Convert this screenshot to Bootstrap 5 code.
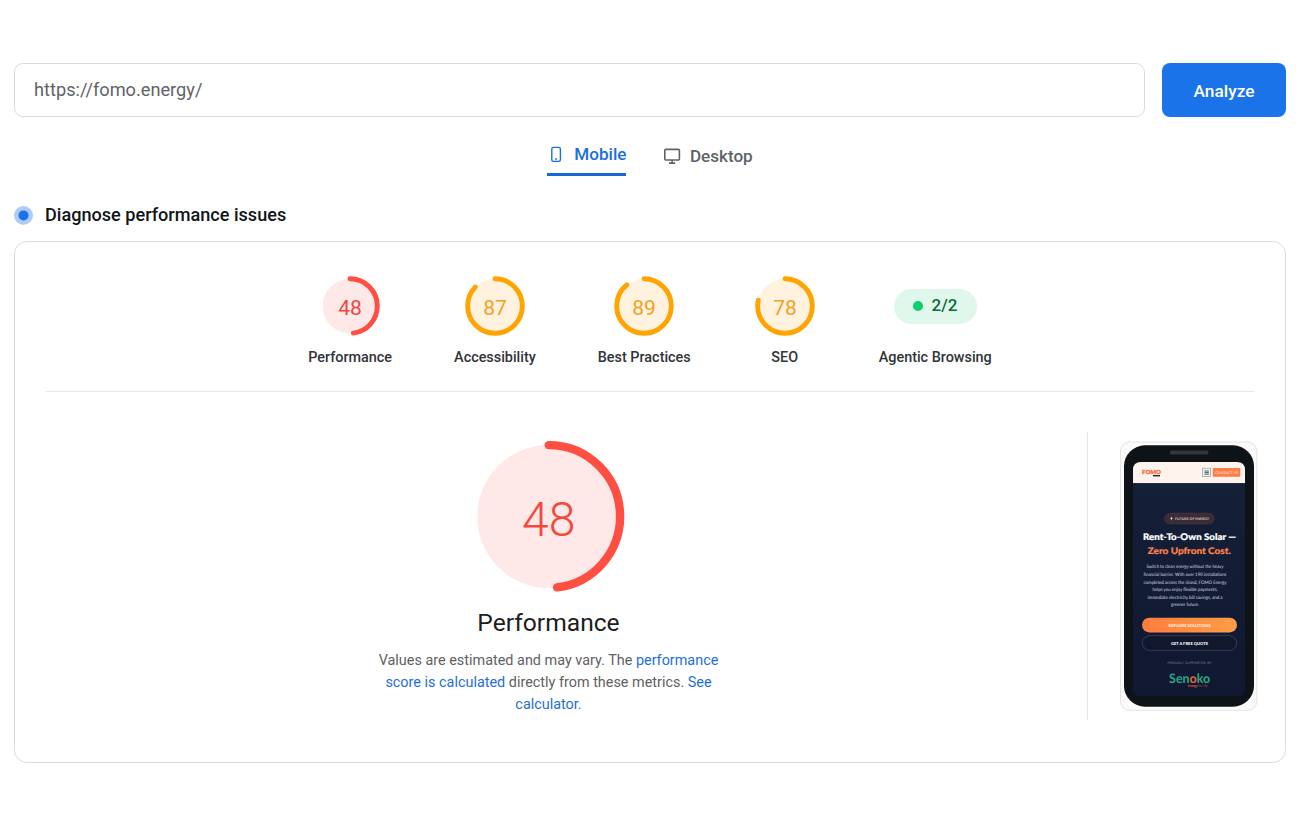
<!DOCTYPE html>
<html lang="en">
<head>
<meta charset="utf-8">
<meta name="viewport" content="width=device-width, initial-scale=1">
<title>PageSpeed report</title>
<link href="https://cdn.jsdelivr.net/npm/bootstrap@5.3.0/dist/css/bootstrap.min.css" rel="stylesheet">
<style>
  body { font-family: Roboto, "Liberation Sans", sans-serif; color: #202124; background: #fff; overflow: hidden; }
  .page { padding: 63px 14px 0; }
  .fw-md { font-weight: 500; }
  .url-box { height: 54px; border: 1px solid #dadce0; border-radius: 9px; padding: 0 19px 2px; font-size: 18.2px; color: #5f6368; }
  .url-box:focus { box-shadow: none; }
  .go-btn { width: 124px; height: 54px; border-radius: 8px; background: #1a73e8; color: #fff; font-size: 17.3px; flex: none; border: 0; }
  .search { gap: 17.5px; }
  .tabs { gap: 37.5px; height: 59px; }
  .tab-item { font-size: 17.1px; line-height: 24px; color: #5f6368; text-decoration: none; }
  .tab-desk { padding-bottom: 8px; }
  .tab-on { color: #1a6fe0; border-bottom: 3px solid #1967d2; height: 34px; }
  .diag { height: 65px; gap: 12px; font-size: 18.1px; color: #111417; padding-bottom: 13px; }
  .report { border: 1px solid #dadce0; border-radius: 13px; height: 522px; padding: 0 31px; }
  .scores { gap: 62px; height: 150px; padding-top: 32px; border-bottom: 1px solid #e8e8e8; }
  .score-label { font-size: 14.4px; line-height: 20px; margin-top: 10px; color: #303438; white-space: nowrap; }
  .pill { height: 35px; width: 83px; border-radius: 18px; background: #e0f8eb; color: #0b6b3a; font-size: 17px; gap: 8.5px; margin: 14.5px 0; }
  .pill-dot { width: 10px; height: 10px; border-radius: 50%; background: #0ccf6b; }
  .detail { height: 288px; margin-top: 40px; margin-right: -3px; }
  .gauge-col { padding-top: 5px; padding-right: 36px; }
  .gauge-title { font-size: 24.6px; line-height: 32px; margin: 12px 0 11px; color: #1b1d20; }
  .gauge-note { width: 350px; font-size: 14.42px; line-height: 21.8px; color: #616161; }
  .gauge-note a { color: #1f6fd6; text-decoration: none; }
  .shot { width: 170px; border-left: 1px solid #e4e4e4; padding: 9px 0 0 32px; flex: none; }
  svg { display: block; flex: none; }
</style>
</head>
<body>
<main class="page">
  <form class="search d-flex">
    <input class="url-box form-control" type="text" value="https://fomo.energy/" aria-label="URL">
    <button class="go-btn btn fw-md p-0 pt-1" type="button">Analyze</button>
  </form>

  <nav class="tabs d-flex justify-content-center align-items-end">
    <a class="tab-item tab-on fw-md d-flex" href="#">
      <svg width="27" height="24" viewBox="0 0 27 24" fill="none" stroke="currentColor" stroke-width="1.4"><rect x="4.8" y="5.4" width="8.6" height="14" rx="1.6"/><path d="M8.1 17h2"/></svg>
      <span>Mobile</span>
    </a>
    <a class="tab-item tab-desk fw-md d-flex" href="#">
      <svg width="26" height="24" viewBox="0 0 26 24" fill="none" stroke="currentColor" stroke-width="1.6"><rect x=".8" y="5.4" width="14.6" height="10.6" rx="1"/><path d="M8.1 16v3M5 19.1h6.2"/></svg>
      <span>Desktop</span>
    </a>
  </nav>

  <div class="diag fw-md d-flex align-items-end">
    <svg width="19" height="27" viewBox="0 0 19 27"><circle cx="9.5" cy="14.4" r="9.5" fill="#aecbfa"/><circle cx="9.5" cy="14.4" r="5" fill="#1a73e8"/></svg>
    <span>Diagnose performance issues</span>
  </div>

  <section class="report">
    <div class="scores d-flex justify-content-center">
      <div class="d-flex flex-column align-items-center">
        <svg width="64" height="64" viewBox="0 0 64 64"><circle cx="32" cy="32" r="27.3" fill="#ffe8e8"/><circle cx="32" cy="32" r="27.3" fill="none" stroke="#ff4e42" stroke-width="4.9" stroke-linecap="round" pathLength="100" stroke-dasharray="48 100" transform="rotate(-90 32 32)"/><text x="32" y="41" text-anchor="middle" font-size="21" fill="#eb4740">48</text></svg>
        <div class="score-label fw-md">Performance</div>
      </div>
      <div class="d-flex flex-column align-items-center">
        <svg width="64" height="64" viewBox="0 0 64 64"><circle cx="32" cy="32" r="27.3" fill="#fff3e0"/><circle cx="32" cy="32" r="27.3" fill="none" stroke="#ffa400" stroke-width="4.9" stroke-linecap="round" pathLength="100" stroke-dasharray="87.2 100" transform="rotate(-90 32 32)"/><text x="32" y="41" text-anchor="middle" font-size="21" fill="#f5a01f">87</text></svg>
        <div class="score-label fw-md">Accessibility</div>
      </div>
      <div class="d-flex flex-column align-items-center">
        <svg width="64" height="64" viewBox="0 0 64 64"><circle cx="32" cy="32" r="27.3" fill="#fff3e0"/><circle cx="32" cy="32" r="27.3" fill="none" stroke="#ffa400" stroke-width="4.9" stroke-linecap="round" pathLength="100" stroke-dasharray="89.2 100" transform="rotate(-90 32 32)"/><text x="32" y="41" text-anchor="middle" font-size="21" fill="#f5a01f">89</text></svg>
        <div class="score-label fw-md">Best Practices</div>
      </div>
      <div class="d-flex flex-column align-items-center">
        <svg width="64" height="64" viewBox="0 0 64 64"><circle cx="32" cy="32" r="27.3" fill="#fff3e0"/><circle cx="32" cy="32" r="27.3" fill="none" stroke="#ffa400" stroke-width="4.9" stroke-linecap="round" pathLength="100" stroke-dasharray="78.4 100" transform="rotate(-90 32 32)"/><text x="32" y="41" text-anchor="middle" font-size="21" fill="#f5a01f">78</text></svg>
        <div class="score-label fw-md">SEO</div>
      </div>
      <div class="d-flex flex-column align-items-center">
        <div class="pill fw-md d-flex align-items-center justify-content-center"><span class="pill-dot"></span><span>2/2</span></div>
        <div class="score-label fw-md">Agentic Browsing</div>
      </div>
    </div>

    <div class="detail d-flex">
      <div class="gauge-col flex-grow-1 d-flex flex-column align-items-center text-center">
        <svg width="160" height="158" viewBox="0 0 160 158"><circle cx="79.7" cy="79.5" r="71.5" fill="#ffe8e8"/><circle cx="79.7" cy="79.5" r="71.4" fill="none" stroke="#ff4e42" stroke-width="8.4" stroke-linecap="round" pathLength="100" stroke-dasharray="48.1 100" transform="rotate(-90 79.7 79.5)"/><text x="79.7" y="99" text-anchor="middle" font-size="48" font-weight="300" fill="#f5483d">48</text></svg>
        <h2 class="gauge-title fw-normal">Performance</h2>
        <p class="gauge-note mb-0">Values are estimated and may vary. The <a href="#">performance score is calculated</a> directly from these metrics. <a href="#">See calculator.</a></p>
      </div>
      <div class="shot">
        <svg width="138" height="270" viewBox="1120 441 138 270" font-family="Lato, sans-serif" text-anchor="middle" text-rendering="geometricPrecision">
          <defs>
            <linearGradient id="cta"><stop offset="0" stop-color="#ff7d3e"/><stop offset="1" stop-color="#ff9d47"/></linearGradient>
            <linearGradient id="sky" x2="0" y2="1"><stop offset="0" stop-color="#142038"/><stop offset="1" stop-color="#111831"/></linearGradient>
          </defs>
          <rect x="1120.5" y="442" width="136.3" height="268.3" rx="9" fill="#fafafa" stroke="#e4e4e4"/>
          <rect x="1124" y="445.3" width="130" height="261.4" rx="21" fill="#0e1317"/>
          <rect x="1170" y="450.4" width="38.3" height="4" rx="1" fill="#33363b"/>
          <path d="M1133 483.3V470q0-8 8-8h96q8 0 8 8v13.3z" fill="#fff3ee"/>
          <path d="M1133 483.3h112v205.7q0 7-7 7h-98q-7 0-7-7z" fill="url(#sky)"/>
          <text x="1151.5" y="474.2" font-size="5.6" font-weight="900" fill="#fb6a3b" stroke="#fb6a3b" stroke-width=".3" textLength="19" lengthAdjust="spacingAndGlyphs">FOMO</text>
          <rect x="1153" y="475" width="7" height="1.4" fill="#26252a"/>
          <rect x="1202.6" y="468.2" width="8" height="8.2" fill="#f3efee" stroke="#91a09f" stroke-width=".7"/>
          <path d="M1204.5 471h4.3M1204.5 472.6h4.3M1204.5 474.2h4.3" stroke="#424b52" stroke-width=".9"/>
          <rect x="1212.8" y="468" width="27.4" height="8.8" fill="#ff7d47"/>
          <text x="1226.5" y="473.6" font-size="3.4" font-weight="700" fill="#ffd7c4" textLength="23" lengthAdjust="spacingAndGlyphs">CONTACT US</text>
          <rect x="1164.8" y="513.2" width="49.2" height="10.6" rx="5.3" fill="#3a2b37" stroke="#5b3a38" stroke-width=".6"/>
          <path d="M1171.7 516.3l-1.5 2.5h1.2l-.5 2 1.8-2.7h-1.2z" fill="#fff"/>
          <text x="1192" y="519.8" font-size="3.5" font-weight="700" fill="#d8cbcc" textLength="34" lengthAdjust="spacingAndGlyphs">FUTURE OF ENERGY</text>
          <text x="1189.5" y="540" font-size="9.1" font-weight="900" fill="#fff" stroke="#fff" stroke-width=".2" textLength="93" lengthAdjust="spacingAndGlyphs">Rent-To-Own Solar —</text>
          <text x="1189.3" y="554" font-size="9.1" font-weight="900" fill="#fc8048" stroke="#fc8048" stroke-width=".2" textLength="83" lengthAdjust="spacingAndGlyphs">Zero Upfront Cost.</text>
          <g font-size="4.7" fill="#d8dce6">
            <text x="1185" y="568.4" textLength="77" lengthAdjust="spacingAndGlyphs">Switch to clean energy without the heavy</text>
            <text x="1185" y="576" textLength="83" lengthAdjust="spacingAndGlyphs">financial barrier. With over 190 installations</text>
            <text x="1185" y="583.6" textLength="83" lengthAdjust="spacingAndGlyphs">completed across the island, FOMO Energy</text>
            <text x="1185" y="591.2" textLength="65" lengthAdjust="spacingAndGlyphs">helps you enjoy flexible payments,</text>
            <text x="1185" y="598.8" textLength="75" lengthAdjust="spacingAndGlyphs">immediate electricity bill savings, and a</text>
            <text x="1185" y="606.3" textLength="28" lengthAdjust="spacingAndGlyphs">greener future.</text>
          </g>
          <rect x="1142" y="617.7" width="95" height="14.8" rx="7.4" fill="url(#cta)"/>
          <text x="1189.5" y="626.5" font-size="4" font-weight="900" fill="#fff1e6" textLength="42" lengthAdjust="spacingAndGlyphs">EXPLORE SOLUTIONS</text>
          <rect x="1142.3" y="635.7" width="94.4" height="14.7" rx="7.3" fill="#11182d" stroke="#444b5e" stroke-width=".7"/>
          <text x="1189.5" y="644.5" font-size="4" font-weight="900" fill="#fff" textLength="37" lengthAdjust="spacingAndGlyphs">GET A FREE QUOTE</text>
          <text x="1189.5" y="663.7" font-size="3.3" fill="#808798" textLength="44">PROUDLY SUPPORTED BY</text>
          <text x="1189.6" y="683" font-size="13" font-weight="700" fill="#20ad89" textLength="41" lengthAdjust="spacingAndGlyphs">Sen<tspan fill="#f2613e">o</tspan>ko</text>
          <text x="1197.8" y="687.2" font-size="4" font-weight="700" fill="#e05b42" textLength="20" lengthAdjust="spacingAndGlyphs">energy <tspan font-weight="400" fill="#9b4b45">for life</tspan></text>
        </svg>
      </div>
    </div>
  </section>
</main>
<script src="https://cdn.jsdelivr.net/npm/bootstrap@5.3.0/dist/js/bootstrap.bundle.min.js"></script>
</body>
</html>
